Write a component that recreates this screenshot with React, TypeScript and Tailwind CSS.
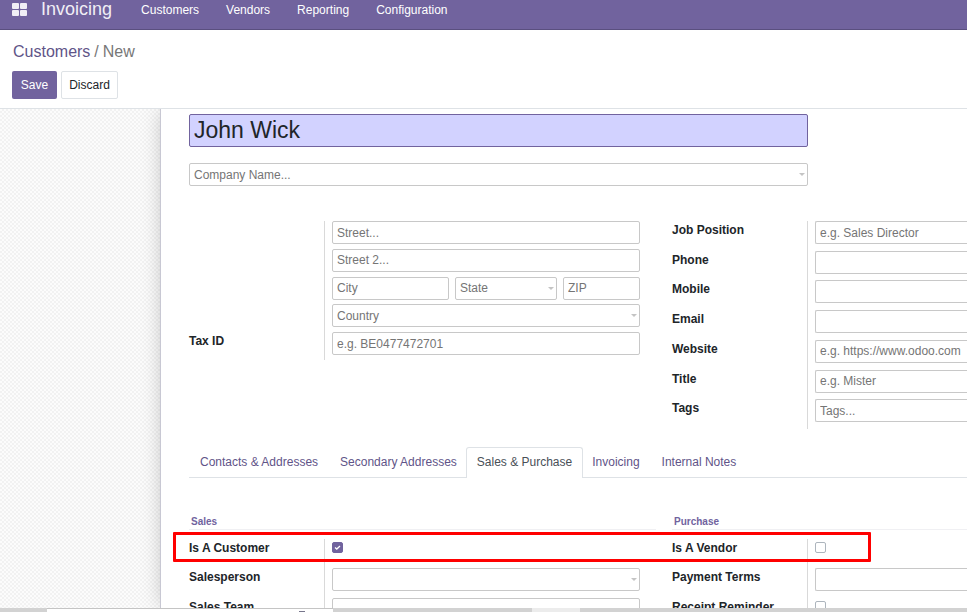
import { useId, useState } from "react";
import type { ReactNode } from "react";

const box = "block h-[23px] w-full border border-[#c8c8c8] bg-white px-1 text-xs text-[#212529] placeholder:text-[#757575] outline-none";

function TextBox({ id, label, placeholder, open }: { id?: string; label?: string; placeholder?: string; open?: boolean }) {
  return (
    <input
      id={id}
      type="text"
      aria-label={label}
      placeholder={placeholder}
      className={`${box} ${open ? "rounded-l-[2px] border-r-0" : "rounded-[2px]"}`}
    />
  );
}

function Picker({ id, label, text }: { id?: string; label?: string; text?: string }) {
  return (
    <div className="relative w-full">
      <select
        id={id}
        aria-label={label}
        className="block h-[23px] w-full appearance-none rounded-[2px] border border-[#c8c8c8] bg-white px-1 text-xs text-[#757575] outline-none"
      >
        <option>{text ?? ""}</option>
      </select>
      <svg className="pointer-events-none absolute top-[10px] right-[3px]" width="6" height="3" viewBox="0 0 6 3">
        <path d="M0 0H6L3 3Z" fill="#c4c4c4" />
      </svg>
    </div>
  );
}

function Tick({ id, on }: { id: string; on?: boolean }) {
  const [checked, setChecked] = useState(Boolean(on));
  return (
    <div className="relative mt-[3px] size-[11px]">
      <input
        id={id}
        type="checkbox"
        checked={checked}
        onChange={(e) => setChecked(e.target.checked)}
        className="block size-[11px] appearance-none rounded-[2px] border border-[#adb5bd] bg-white checked:border-[#71639e] checked:bg-[#71639e]"
      />
      {checked && (
        <svg className="pointer-events-none absolute inset-0" width="11" height="11" viewBox="0 0 11 11">
          <path d="M3 5.4L4.8 7L8 4" fill="none" stroke="#fff" strokeWidth="1.3" />
        </svg>
      )}
    </div>
  );
}

function Row({ label, children }: { label?: string; children: (id: string) => ReactNode }) {
  const id = useId();
  return (
    <div className="flex flex-1">
      <div className="w-[135px] shrink-0 text-xs leading-[18px] font-bold text-[#212529]">
        {label && <label htmlFor={id}>{label}</label>}
      </div>
      <div className="min-w-0 flex-1 border-l border-[#d9d9d9] pl-[7px]">{children(id)}</div>
    </div>
  );
}

const menus = ["Customers", "Vendors", "Reporting", "Configuration"];
const tabs = ["Contacts & Addresses", "Secondary Addresses", "Sales & Purchase", "Invoicing", "Internal Notes"];
const contact = [
  { label: "Job Position", hint: "e.g. Sales Director" },
  { label: "Phone" },
  { label: "Mobile" },
  { label: "Email" },
  { label: "Website", hint: "e.g. https://www.odoo.com" },
  { label: "Title", hint: "e.g. Mister" },
  { label: "Tags", hint: "Tags..." },
];

export default function App() {
  return (
    <div className="flex h-screen flex-col overflow-hidden bg-white font-['Liberation_Sans',Arial,sans-serif] text-[#212529]">
      <header className="flex h-[30px] shrink-0 items-start border-b border-[#5a4f7f] bg-[#71639e] pl-3 text-white">
        <button aria-label="Apps" className="mt-[3px] grid grid-cols-2 gap-px">
          <span className="h-[6px] w-[7px] rounded-[1px] bg-[#f0eef5]" />
          <span className="h-[6px] w-[7px] rounded-[1px] bg-[#f0eef5]" />
          <span className="h-[6px] w-[7px] rounded-[1px] bg-[#f0eef5]" />
          <span className="h-[6px] w-[7px] rounded-[1px] bg-[#f0eef5]" />
        </button>
        <a href="#invoicing" className="ml-[14px] text-lg leading-[18px] text-[#f0eef5]">Invoicing</a>
        <nav className="ml-[29px] flex gap-[27px] text-xs leading-5">
          {menus.map((m) => (
            <a key={m} href={`#${m.toLowerCase()}`}>{m}</a>
          ))}
        </nav>
      </header>

      <section className="shrink-0 border-b border-[#dee2e6] px-3 pt-3 pb-[9px]">
        <div className="flex gap-1 pl-px text-base leading-[19px] text-[#777]">
          <a href="#customers" className="text-[#5f5488]">Customers</a>
          <span>/</span>
          <span>New</span>
        </div>
        <div className="mt-[10px] flex gap-1">
          <button className="h-7 w-[45px] rounded-[2px] bg-[#71639e] text-xs text-white">Save</button>
          <button className="h-7 w-[57px] rounded-[2px] border border-[#dee2e6] bg-white text-xs">Discard</button>
        </div>
      </section>

      <main className="flex min-h-0 flex-1 overflow-hidden bg-[repeating-conic-gradient(#f2f2f2_0_25%,#fcfcfc_0_50%)] bg-[length:4px_4px] pl-40">
        <form className="min-w-0 flex-1 border-l border-[#c8c8d3] bg-white pt-[5px] pl-7 shadow-[0_0_20px_-3px_rgba(0,0,0,0.25)]">
          <div className="w-[619px] max-w-full">
            <input
              aria-label="Name"
              defaultValue="John Wick"
              className="block h-[33px] w-full rounded-[2px] border border-[#71639e] bg-[#d2d2ff] px-1 text-[23px] text-[#212529] outline-none"
            />
            <div className="mt-4">
              <Picker label="Company" text="Company Name..." />
            </div>
          </div>

          <div className="mt-[35px] grid grid-cols-[467px_minmax(0,1fr)] items-start gap-4">
            <div className="mr-4 flex h-[139px] flex-col">
              <Row>{() => <TextBox label="Street" placeholder="Street..." />}</Row>
              <Row>{() => <TextBox label="Street 2" placeholder="Street 2..." />}</Row>
              <Row>
                {() => (
                  <div className="grid grid-cols-[117px_102px_minmax(0,1fr)] gap-[6px]">
                    <TextBox label="City" placeholder="City" />
                    <Picker label="State" text="State" />
                    <TextBox label="ZIP" placeholder="ZIP" />
                  </div>
                )}
              </Row>
              <Row>{() => <Picker label="Country" text="Country" />}</Row>
              <Row label="Tax ID">{(id) => <TextBox id={id} placeholder="e.g. BE0477472701" />}</Row>
            </div>
            <div className="flex h-52 flex-col">
              {contact.map((f) => (
                <Row key={f.label} label={f.label}>{(id) => <TextBox id={id} placeholder={f.hint} open />}</Row>
              ))}
            </div>
          </div>

          <div role="tablist" className="mt-[18px] flex h-[31px] border-b border-[#dee2e6]">
            {tabs.map((t) => (
              <button
                key={t}
                type="button"
                role="tab"
                aria-selected={t === "Sales & Purchase"}
                className={
                  t === "Sales & Purchase"
                    ? "-mx-[2px] -mb-px rounded-t-[3px] border border-b-0 border-[#dee2e6] bg-white px-[10px] pb-[2px] text-xs text-[#495057]"
                    : "px-[11px] text-xs text-[#5f5488]"
                }
              >
                {t}
              </button>
            ))}
          </div>

          <div className="relative mt-[38px] grid grid-cols-[467px_minmax(0,1fr)] gap-4">
            <div>
              <h2 className="mb-[9px] border-b border-[#f0f0f3] pb-px pl-[2px] text-[10px] leading-3 font-bold text-[#71639e]">Sales</h2>
              <div className="mr-4 flex h-[88px] flex-col">
                <Row label="Is A Customer">{(id) => <Tick id={id} on />}</Row>
                <Row label="Salesperson">{(id) => <Picker id={id} />}</Row>
                <Row label="Sales Team">{(id) => <TextBox id={id} />}</Row>
              </div>
            </div>
            <div>
              <h2 className="mb-[9px] border-b border-[#f0f0f3] pb-px pl-[2px] text-[10px] leading-3 font-bold text-[#71639e]">Purchase</h2>
              <div className="flex h-[88px] flex-col">
                <Row label="Is A Vendor">{(id) => <Tick id={id} />}</Row>
                <Row label="Payment Terms">{(id) => <TextBox id={id} open />}</Row>
                <Row label="Receipt Reminder">{(id) => <Tick id={id} />}</Row>
              </div>
            </div>
            <div className="pointer-events-none absolute top-4 -left-4 h-[30px] w-[698px] rounded-[1px] border-[3px] border-[#ff0000]" />
          </div>
        </form>
      </main>

      <footer className="relative z-10 flex h-1 shrink-0 bg-[#d2d2d2]">
        <div className="w-[47px]" />
        <div className="w-[286px] border-t border-[#c4c4c4] bg-white pt-[2px] pl-[252px]">
          <div className="h-px w-[6px] bg-[#77768c]" />
        </div>
        <div className="w-[199px]" />
        <div className="w-12 bg-[#ececec]" />
      </footer>
    </div>
  );
}
